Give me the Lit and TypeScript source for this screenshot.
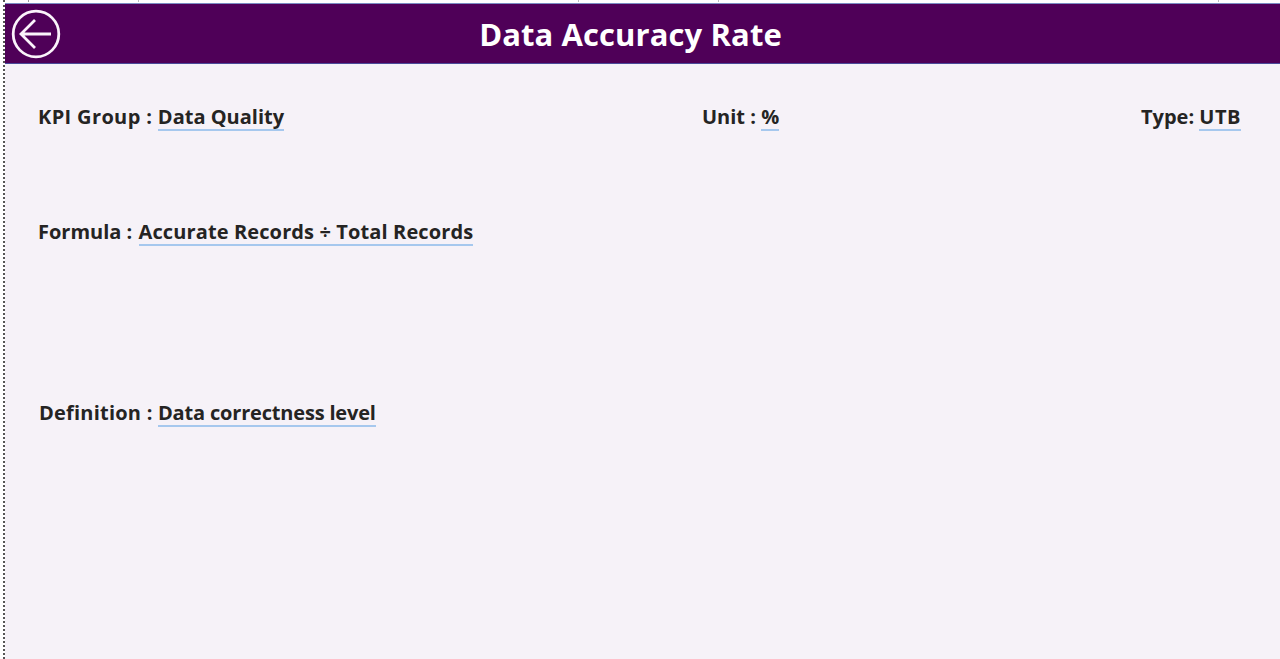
import { LitElement, html, css } from "lit";
import { customElement } from "lit/decorators.js";

@customElement("app-root")
export class AppRoot extends LitElement {
  static styles = css`
    :host {
      display: block;
      height: 659px;
      overflow: hidden;
      background: #fff;
      font-family: "Open Sans", "Noto Sans", sans-serif;
      color: #252423;
    }
    .frame {
      box-sizing: border-box;
      height: 659px;
      margin-left: 3px;
      padding-top: 3px;
      border-left: 2px dotted #555;
      display: flex;
      flex-direction: column;
      background:
        linear-gradient(#999, #999) 23px 0 / 1px 2px no-repeat,
        linear-gradient(#bbb, #bbb) 133px 0 / 1px 2px no-repeat,
        linear-gradient(#bbb, #bbb) 573px 0 / 1px 2px no-repeat,
        linear-gradient(#bbb, #bbb) 713px 0 / 1px 2px no-repeat,
        linear-gradient(#bbb, #bbb) 1213px 0 / 1px 2px no-repeat;
    }
    .page {
      flex: 1;
      background: #f6f2f8;
      display: flex;
      flex-direction: column;
    }
    header {
      height: 61px;
      box-sizing: border-box;
      background: #4f0058;
      border-top: 1px solid #7a8cc4;
      border-bottom: 1px solid #4a4a9a;
      display: grid;
      grid-template-columns: 60px 1fr 60px;
      align-items: center;
    }
    .back {
      display: flex;
      padding-left: 6px;
    }
    .back svg {
      width: 50px;
      height: 50px;
      display: block;
    }
    h1 {
      margin: 0;
      text-align: center;
      font-size: 31px;
      line-height: 40px;
      font-weight: 700;
      color: #fff;
      letter-spacing: 0.1px;
      padding-right: 24px;
    }
    .row {
      display: grid;
      font-size: 20px;
      line-height: 27px;
      font-weight: 700;
      white-space: nowrap;
    }
    .top {
      margin-top: 39px;
      padding-left: 33px;
      grid-template-columns: 664px 439px 1fr;
    }
    .formula {
      margin-top: 87px;
      padding-left: 33px;
    }
    .definition {
      margin-top: 153px;
      padding-left: 34px;
    }
    .val {
      display: inline-block;
      border-bottom: 2px solid #a6c8ee;
      line-height: 25px;
    }
    .kpi-label {
      letter-spacing: 0.36px;
    }
    .def-label {
      letter-spacing: 0.22px;
    }
    .formula-val {
      margin-left: 1px;
      letter-spacing: 0.12px;
    }
    .def-val {
      letter-spacing: -0.18px;
    }
    .type-val {
      letter-spacing: 0.5px;
    }
  `;

  render() {
    return html`
      <div class="frame">
        <div class="page">
          <header>
            <div class="back">
              <svg viewBox="0 0 50 50" fill="none" stroke="#fbf3fb" stroke-width="2.8">
                <circle cx="25" cy="25" r="22.8" />
                <path d="M40 25 H11 M24 11 L10 25 L24 39" />
              </svg>
            </div>
            <h1>Data Accuracy Rate</h1>
            <div></div>
          </header>
          <div class="row top">
            <div><span class="kpi-label">KPI Group : </span><span class="val">Data Quality</span></div>
            <div>Unit : <span class="val">%</span></div>
            <div>Type: <span class="val type-val">UTB</span></div>
          </div>
          <div class="row formula">
            <div>Formula : <span class="val formula-val">Accurate Records ÷ Total Records</span></div>
          </div>
          <div class="row definition">
            <div><span class="def-label">Definition : </span><span class="val def-val">Data correctness level</span></div>
          </div>
        </div>
      </div>
    `;
  }
}
